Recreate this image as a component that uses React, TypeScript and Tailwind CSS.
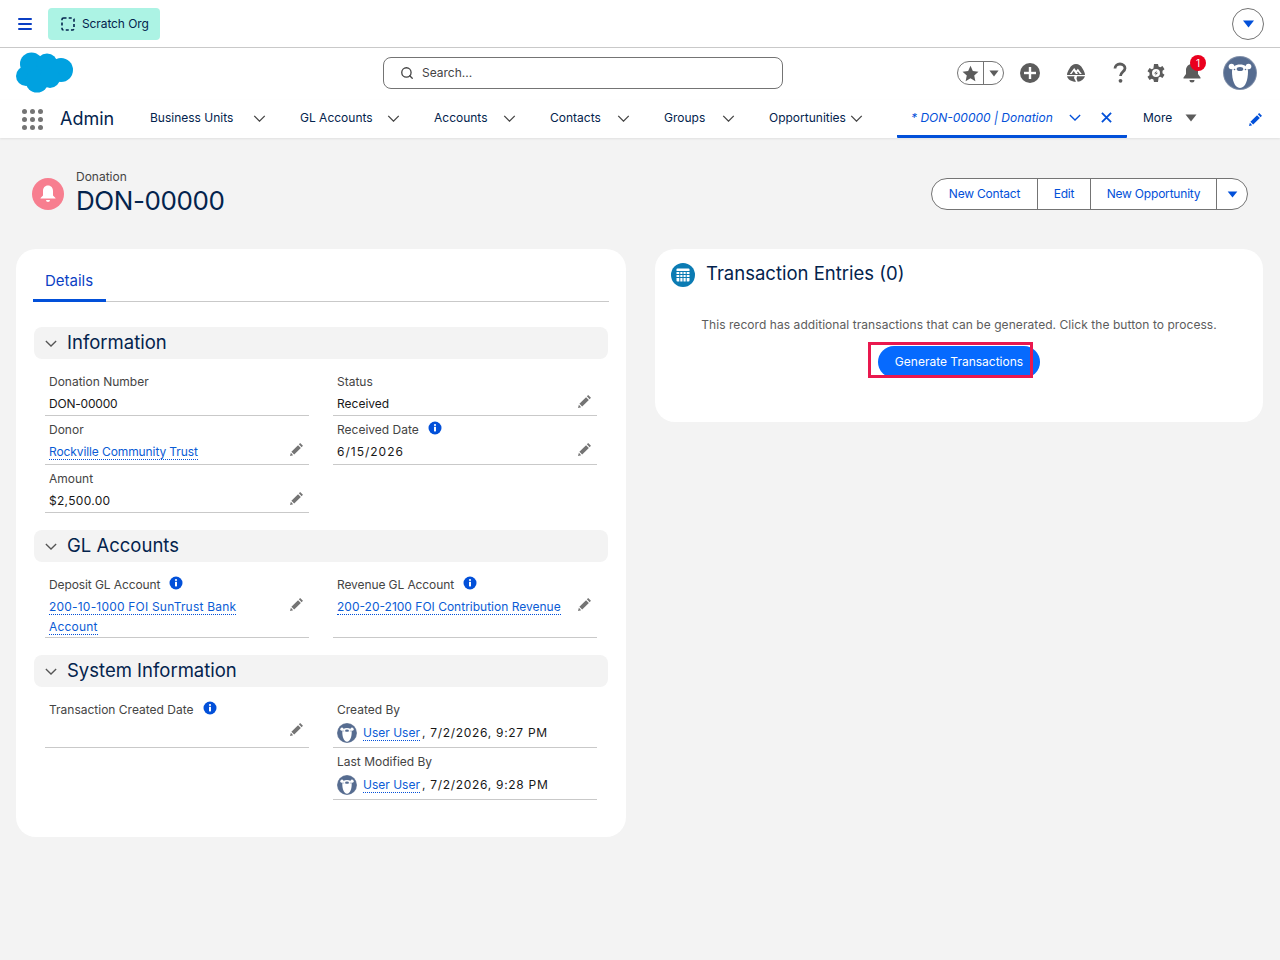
import React from "react";
import { Search } from "lucide-react";

const Pencil = ({ className = "" }: { className?: string }) => (
  <svg viewBox="0 0 16 16" className={`w-[14px] h-[14px] fill-current ${className}`}>
    <path d="M11.6 1.200l3.200 3.200-1.500 1.500-3.200-3.200zM9.200 3.600l3.200 3.200-7.600 7.600-3.200-3.200zM1 12.400l2.600 2.600-3.600 1z" />
  </svg>
);

const Caret = ({ className = "" }: { className?: string }) => (
  <svg viewBox="0 0 12 8" className={`fill-current ${className}`}>
    <path d="M0.5 0.5h11L6 7.5z" />
  </svg>
);

const Chevron = ({ className = "" }: { className?: string }) => (
  <svg viewBox="0 0 14 8" className={`fill-none stroke-current stroke-[1.5] shrink-0 ${className}`}>
    <path d="M1 1l6 6 6-6" />
  </svg>
);

const Info = () => (
  <svg viewBox="0 0 14 14" className="w-[14px] h-[14px] ml-[9px] mt-[-4px] shrink-0">
    <circle cx="7" cy="7" r="6.500" fill="#0250d9" />
    <rect x="6" y="5.800" width="2" height="4.600" fill="#fff" />
    <circle cx="7" cy="4" r="1.100" fill="#fff" />
  </svg>
);

const Bear = ({ size }: { size: number }) => (
  <svg viewBox="0 0 34 34" style={{ width: size, height: size }} className="shrink-0">
    <circle cx="17" cy="17" r="17" fill="#7f8ea8" />
    <circle cx="17" cy="17" r="16" fill="#566c90" />
    <circle cx="8.500" cy="10.500" r="2.800" fill="#fff" />
    <circle cx="25.500" cy="10.500" r="2.800" fill="#fff" />
    <path d="M17 8.500c5 0 8 2.500 8 7 0 8-2.500 16.500-8 16.500s-8-8.500-8-16.500c0-4.500 3-7 8-7z" fill="#fff" />
    <ellipse cx="17" cy="13" rx="3.300" ry="2" fill="#566c90" />
    <circle cx="11.500" cy="13.500" r="0.800" fill="#566c90" />
    <circle cx="22.500" cy="13.500" r="0.800" fill="#566c90" />
  </svg>
);

const Link = ({ children }: { children: React.ReactNode }) => (
  <a className="text-[#0b5cd5] border-b border-dotted border-[#0250d9]">{children}</a>
);

const Field = ({
  label,
  info,
  pencil,
  className = "h-[48px]",
  children,
  pencilClass = "top-[26px]",
  labelClass = "",
  valueClass = "",
}: {
  label?: string;
  info?: boolean;
  pencil?: boolean;
  className?: string;
  pencilClass?: string;
  labelClass?: string;
  valueClass?: string;
  children?: React.ReactNode;
}) => (
  <div className={`relative w-[264px] border-b border-[#c9c9c9] px-1 pt-[5px] ${className}`}>
    <div className={`flex items-center h-[18px] text-[#444444] ${labelClass}`}>
      {label}
      {info && <Info />}
    </div>
    <div className={`mt-[3px] text-[#181818] leading-[20px] pr-[28px] ${valueClass}`}>{children}</div>
    {pencil && (
      <span className={`absolute right-[5px] text-[#747474] ${pencilClass}`}>
        <Pencil />
      </span>
    )}
  </div>
);

const Section = ({ title, children }: { title: string; children: React.ReactNode }) => (
  <section className="mb-[17px]">
    <div className="mx-[2px] h-[32px] rounded-lg bg-[#f3f3f3] flex items-center pl-[11px]">
      <Chevron className="w-[12px] h-[7px] text-[#555]" />
      <span className="ml-[10px] text-[18.500px] text-[#03234d]">{title}</span>
    </div>
    <div className="mt-[9px] ml-[13px] grid grid-cols-[264px_264px] gap-x-[24px]">{children}</div>
  </section>
);

const NavItem = ({ label, w }: { label: string; w: string }) => (
  <div className={`flex items-center justify-between pr-[34px] ${w}`}>
    <span className="text-[#03234d] whitespace-nowrap pb-[2px]">{label}</span>
    <Chevron className="w-[13px] h-[7px] text-[#444] mb-[2px]" />
  </div>
);

const UserLine = ({ time }: { time: string }) => (
  <div className="flex items-center mt-[4px]">
    <Bear size={20} />
    <span className="ml-[6px]">
      <Link>User User</Link>
    </span>
    <span className="ml-[2px] tracking-[0.7px]">, {time}</span>
  </div>
);

export default function App() {
  return (
    <div className="min-h-[960px] bg-[#f3f3f3] text-[12px] font-['Inter',sans-serif]">
      {/* Top bar */}
      <div className="h-[48px] bg-white border-b border-[#c9c9c9] flex items-center pl-[18px] pr-4">
        <svg viewBox="0 0 14 12" className="w-[14px] h-[12px] fill-[#0b3fc4]">
          <rect y="0" width="14" height="2" rx="1" />
          <rect y="5" width="14" height="2" rx="1" />
          <rect y="10" width="14" height="2" rx="1" />
        </svg>
        <div className="ml-4 w-[112px] h-[32px] rounded bg-[#acf3e4] flex items-center pl-[13px] text-[#03234d]">
          <svg viewBox="0 0 14 14" className="w-[14px] h-[14px] fill-none stroke-[#03234d] stroke-[1.6]">
            <rect x="1" y="1" width="12" height="12" rx="1.500" strokeDasharray="3 2.200" />
          </svg>
          <span className="ml-[7px] tracking-[-0.1px]">Scratch Org</span>
        </div>
        <button className="ml-auto w-[32px] h-[32px] rounded-full bg-white border border-[#747474] flex items-center justify-center text-[#0250d9]">
          <Caret className="w-[13px] h-[8px]" />
        </button>
      </div>

      {/* Global header */}
      <div className="h-[52px] bg-white flex items-center pl-4 relative">
        <svg viewBox="0 0 58 41" className="w-[58px] h-[41px] mt-[-3px] shrink-0 fill-[#00a1e0]">
          <circle cx="15.500" cy="12" r="11.500" />
          <circle cx="31" cy="12" r="10.500" />
          <circle cx="45" cy="18" r="12" />
          <circle cx="10" cy="24" r="10" />
          <circle cx="21" cy="29" r="11.500" />
          <circle cx="34" cy="26" r="10" />
        </svg>
        <div className="ml-[309px] w-[400px] h-[32px] mt-[-2px] rounded-lg border border-[#747474] bg-white flex items-center pl-4 text-[#444]">
          <Search size={14} strokeWidth={2.25} className="text-[#444]" />
          <span className="ml-2">Search...</span>
        </div>
        <div className="ml-[174px] flex items-center mt-[-2px]">
          <div className="w-[47px] h-[24px] rounded-full border border-[#747474] flex items-center text-[#5c5c5c]">
            <div className="w-[26px] h-full border-r border-[#747474] flex items-center justify-center">
              <svg viewBox="0 0 16 16" className="w-[17px] h-[17px] fill-current">
                <path d="M8 .8l2.200 4.900 5.300.6-4 3.600 1.100 5.300L8 12.500l-4.600 2.700 1.100-5.300-4-3.600 5.300-.6z" />
              </svg>
            </div>
            <div className="flex-1 flex items-center justify-center">
              <Caret className="w-[10px] h-[7px]" />
            </div>
          </div>
          <svg viewBox="0 0 20 20" className="ml-[16px] w-[20px] h-[20px]">
            <circle cx="10" cy="10" r="10" fill="#5c5c5c" />
            <rect x="8.800" y="4" width="2.400" height="12" fill="#fff" />
            <rect x="4" y="8.800" width="12" height="2.400" fill="#fff" />
          </svg>
          <svg viewBox="0 0 20 20" className="ml-[26px] w-[20px] h-[20px] fill-[#5c5c5c]">
            <path d="M10 1c2.800 0 5 1.700 6.500 4.500C18 8 19 10 19 12H1c0-2 1-4 2.500-6.500C5 2.700 7.200 1 10 1z" />
            <path fill="#fff" d="M3.800 11l4.400-6 2 2.700 1.700-2 3.900 5.300h-2l-1.900-2.500-.9 1.100 1 1.400h-2.200l-2.100-3-2.100 3z" />
            <path d="M1 13.300h7.500L8 15l2 3.800C5 18.800 2 16.500 1 13.300zM11 13.300h8c-1 3-3.800 5.300-7.300 5.500l-1.200-3z" />
          </svg>
          <svg viewBox="0 0 14 22" className="ml-[27px] w-[14px] h-[22px]">
            <path d="M2 6.500C2 3.800 4.200 2 7 2s5 1.800 5 4.300c0 3.400-4.500 3.600-4.500 7.700" fill="none" stroke="#5c5c5c" strokeWidth="2.800" />
            <circle cx="7.500" cy="18.800" r="1.900" fill="#5c5c5c" />
          </svg>
          <svg viewBox="0 0 20 20" className="ml-[19px] w-[20px] h-[20px]">
            <path
              fill="#5c5c5c"
              fillRule="evenodd"
              d="M8 1h4l.6 2.500 1.700.7 2.200-1.300 2 3.400-2 1.400v2.600l2 1.400-2 3.400-2.200-1.300-1.700.7L12 19H8l-.6-2.500-1.700-.7-2.200 1.300-2-3.400 2-1.400V9.700l-2-1.400 2-3.400 2.200 1.300 1.700-.7zM10 6a4 4 0 100 8 4 4 0 000-8z"
            />
            <path fill="#5c5c5c" d="M11 7.500L8 10.500h2l-1 2.200 3-3h-2z" />
          </svg>
          <div className="ml-[16px] relative w-[20px] h-[20px]">
            <svg viewBox="0 0 20 20" className="w-[20px] h-[20px] fill-[#5c5c5c]">
              <path d="M10 1c3.500 0 6 2.700 6 6v4l2.500 3.500v1h-17v-1L4 11V7c0-3.300 2.500-6 6-6zM7.500 17h5a2.500 2.500 0 01-5 0z" />
            </svg>
            <span className="absolute left-[8px] top-[-8px] w-[16px] h-[16px] rounded-full bg-[#ea001e] text-white text-[10px] flex items-center justify-center">1</span>
          </div>
          <span className="ml-[21px]">
            <Bear size={34} />
          </span>
        </div>
      </div>

      {/* Nav */}
      <div className="h-[38px] bg-white shadow-[0_1px_2px_rgba(0,0,0,0.08)] flex items-center pl-[22px] relative">
        <svg viewBox="0 0 21 21" className="w-[21px] h-[21px] fill-[#747474] shrink-0">
          {[2.5, 10.5, 18.5].map((y) =>
            [2.5, 10.5, 18.5].map((x) => <circle key={`${x}-${y}`} cx={x} cy={y} r="2.500" />)
          )}
        </svg>
        <span className="ml-[17px] w-[90px] text-[18px] text-[#03234d] pb-[2px]">Admin</span>
        <NavItem label="Business Units" w="w-[150px]" />
        <NavItem label="GL Accounts" w="w-[134px]" />
        <NavItem label="Accounts" w="w-[116px]" />
        <NavItem label="Contacts" w="w-[114px]" />
        <NavItem label="Groups" w="w-[105px]" />
        <NavItem label="Opportunities" w="w-[128px]" />
        <div className="h-[38px] w-[230px] border-b-[3px] border-[#0250d9] rounded-b-[1px] flex items-center pl-[14px] pr-[12px] text-[#0250d9]">
          <span className="italic w-[141px] whitespace-nowrap">* DON-00000 | Donation</span>
          <Chevron className="ml-[17px] w-[12px] h-[7px] stroke-2" />
          <svg viewBox="0 0 12 12" className="ml-[20px] w-[11px] h-[11px] stroke-current stroke-2 fill-none">
            <path d="M1 1l10 10M11 1L1 11" />
          </svg>
        </div>
        <span className="ml-[16px] text-[#03234d] pb-[2px]">More</span>
        <Caret className="ml-[13px] w-[12px] h-[8px] text-[#5c5c5c] mb-[2px]" />
        <span className="ml-auto mr-[17px] text-[#0250d9]">
          <Pencil />
        </span>
      </div>

      {/* Record header */}
      <div className="h-[111px] flex items-start pl-[32px] pr-[32px] pt-[32px]">
        <div className="w-[32px] h-[32px] mt-[8px] rounded-full bg-[#f77e8f] flex items-center justify-center">
          <svg viewBox="0 0 20 20" className="w-[20px] h-[20px] fill-white">
            <path d="M10 1.500c3.200 0 5 2.400 5 5.500v4.500l2.500 2.500v.5h-15V14L5 11.500V7c0-3.100 1.800-5.500 5-5.500zM8 16h4a2 2 0 01-4 0z" />
          </svg>
        </div>
        <div className="ml-[12px] mt-[-1px]">
          <div className="leading-[16px] text-[#444]">Donation</div>
          <div className="text-[26px] tracking-[-0.4px] leading-[32px] text-[#03234d]">DON-00000</div>
        </div>
        <div className="ml-auto mt-[8px] flex h-[32px] rounded-full border border-[#747474] bg-white text-[#0250d9] tracking-[-0.2px]">
          <div className="w-[105px] flex items-center justify-center">New Contact</div>
          <div className="w-[53px] border-l border-[#747474] flex items-center justify-center">Edit</div>
          <div className="w-[126px] border-l border-[#747474] flex items-center justify-center">New Opportunity</div>
          <div className="w-[31px] border-l border-[#747474] flex items-center justify-center">
            <Caret className="w-[11px] h-[7px]" />
          </div>
        </div>
      </div>

      {/* Cards */}
      <div className="flex items-start pl-4 gap-[29px]">
        <div className="w-[610px] h-[588px] bg-white rounded-[20px] pt-4 px-4">
          <div className="h-[37px] border-b border-[#c9c9c9] mr-[1px] mb-[25px] ml-[1px] flex">
            <div className="w-[73px] h-[37px] border-b-[3px] border-[#0250d9] pl-[12px] pt-[5px] text-[15px] text-[#0b3fc4]">Details</div>
          </div>
          <Section title="Information">
            <Field label="Donation Number" valueClass="tracking-[-0.2px]">DON-00000</Field>
            <Field label="Status" pencil>Received</Field>
            <Field label="Donor" pencil className="h-[49px]" valueClass="tracking-[-0.1px]">
              <Link>Rockville Community Trust</Link>
            </Field>
            <Field label="Received Date" info pencil className="h-[49px]" valueClass="tracking-[1px]">6/15/2026</Field>
            <Field label="Amount" pencil valueClass="tracking-[0.3px]">$2,500.00</Field>
          </Section>
          <Section title="GL Accounts">
            <Field label="Deposit GL Account" labelClass="tracking-[-0.1px]" info pencil className="h-[67px]" valueClass="tracking-[0.2px]">
              <Link>200-10-1000 FOI SunTrust Bank</Link>
              <br />
              <Link>Account</Link>
            </Field>
            <Field label="Revenue GL Account" labelClass="tracking-[-0.1px]" info pencil className="h-[67px]">
              <Link>200-20-2100 FOI Contribution Revenue</Link>
            </Field>
          </Section>
          <Section title="System Information">
            <Field label="Transaction Created Date" info pencil className="h-[52px]" />
            <div>
              <Field label="Created By" className="h-[52px]">
                <UserLine time="7/2/2026, 9:27 PM" />
              </Field>
              <Field label="Last Modified By" className="h-[52px]">
                <UserLine time="7/2/2026, 9:28 PM" />
              </Field>
            </div>
          </Section>
        </div>

        <div className="w-[608px] h-[173px] bg-white rounded-[20px] pt-[14px] px-4">
          <div className="flex items-center h-[24px]">
            <svg viewBox="0 0 24 24" className="w-[24px] h-[24px]">
              <circle cx="12" cy="12" r="12" fill="#0b7bb3" />
              <rect x="5.500" y="5.500" width="13" height="13" rx="1" fill="#fff" />
              <path d="M5 8.500h14M5 11.500h14M5 14.500h14M8.800 8v11M12 8v11M15.200 8v11" stroke="#0b7bb3" strokeWidth="1" />
            </svg>
            <span className="ml-[11px] text-[18.500px] leading-[22px] mt-[-4px] text-[#03234d]">Transaction Entries (0)</span>
          </div>
          <div className="mt-[28px] text-center text-[#5c5c5c] leading-[20px] tracking-[0.06px]">
            This record has additional transactions that can be generated. Click the button to process.
          </div>
          <div className="mt-[11px] flex justify-center">
            <div className="relative">
              <button className="w-[162px] h-[32px] rounded-full bg-[#066afe] text-white">Generate Transactions</button>
              <span className="absolute left-[-10px] top-[-4px] w-[165px] h-[36px] border-[3px] border-[#e9184e]" />
            </div>
          </div>
        </div>
      </div>
    </div>
  );
}
